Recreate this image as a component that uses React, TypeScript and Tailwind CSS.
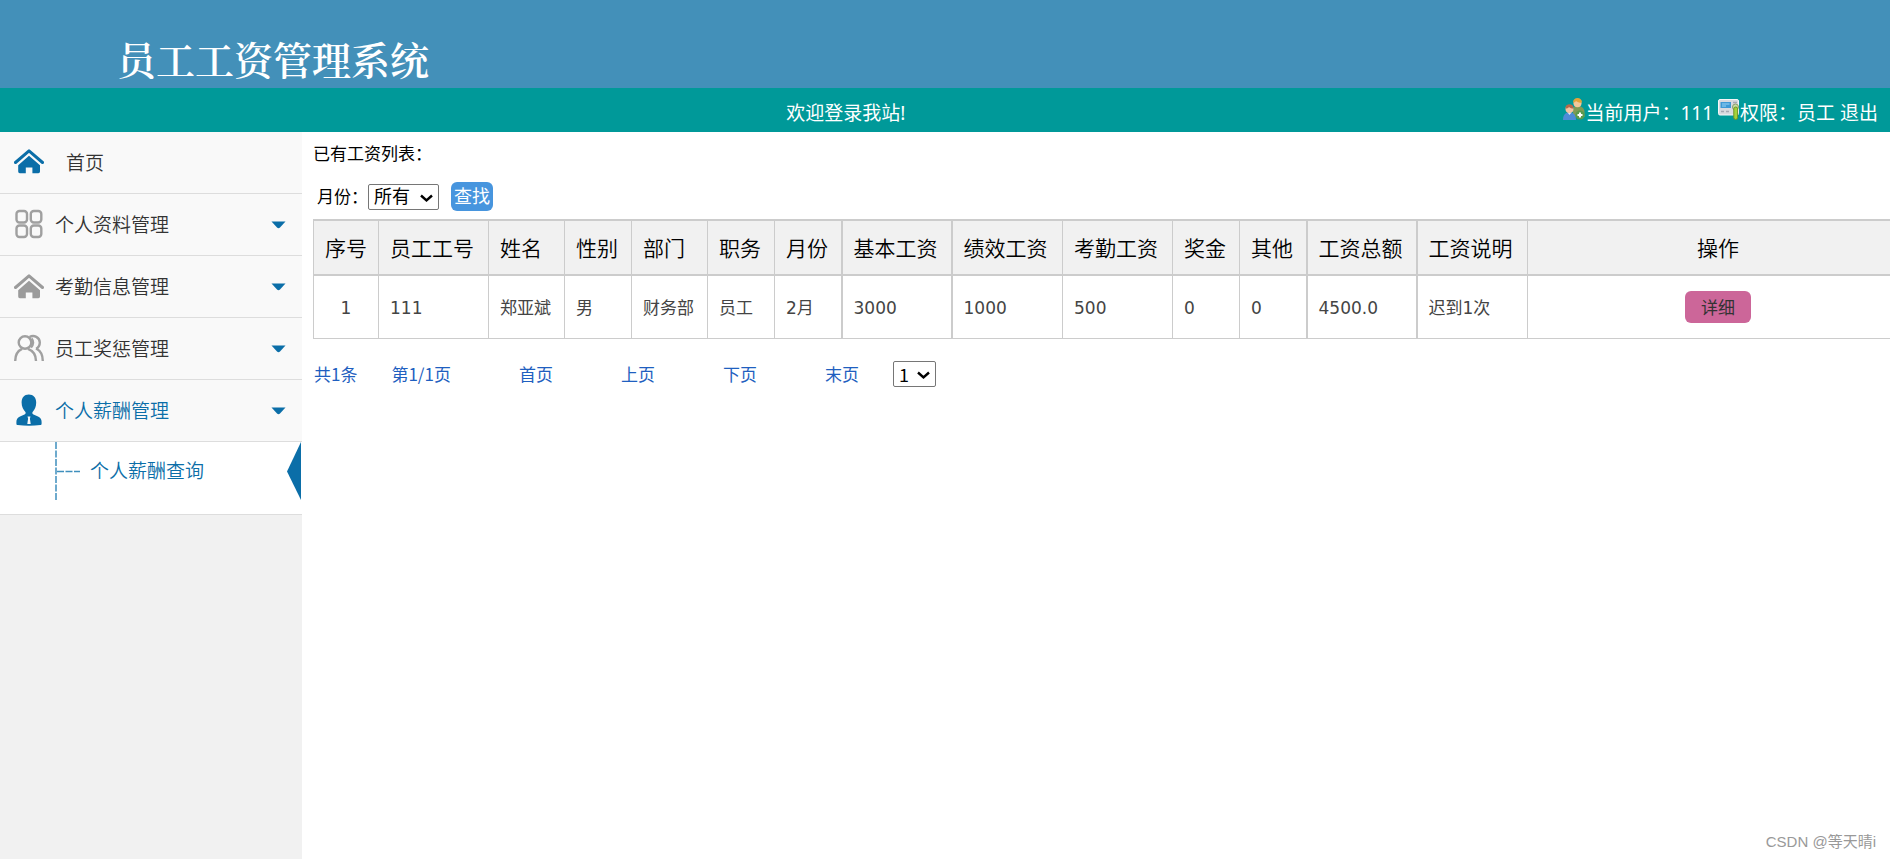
import type { ReactNode } from "react";

const columns = [
  { title: "序号", width: "w-[65px]" },
  { title: "员工工号", width: "w-[110px]" },
  { title: "姓名", width: "w-[76px]" },
  { title: "性别", width: "w-[67px]" },
  { title: "部门", width: "w-[76px]" },
  { title: "职务", width: "w-[67px]" },
  { title: "月份", width: "w-[67px]", thick: true },
  { title: "基本工资", width: "w-[110px]", thick: true },
  { title: "绩效工资", width: "w-[111px]" },
  { title: "考勤工资", width: "w-[110px]" },
  { title: "奖金", width: "w-[67px]" },
  { title: "其他", width: "w-[67px]", thick: true },
  { title: "工资总额", width: "w-[110px]", thick: true },
  { title: "工资说明", width: "w-[111px]" },
];

const rows = [
  ["1", "111", "郑亚斌", "男", "财务部", "员工", "2月", "3000", "1000", "500", "0", "0", "4500.0", "迟到1次"],
];

function HomeIcon({ color }: { color: string }) {
  return (
    <svg width="30" height="26" viewBox="0 0 30 26" fill="none">
      <path d="M1.5 14.500 15 2.800l13.500 11.700" stroke={color} strokeWidth="3" strokeLinecap="round" strokeLinejoin="round" />
      <path d="M15 7.800 26 17.300v6.300a1.600 1.600 0 0 1-1.600 1.600h-6v-5.600h-6.600v5.600h-6a1.600 1.600 0 0 1-1.600-1.600v-6.300z" fill={color} />
    </svg>
  );
}

function GridIcon() {
  return (
    <svg width="30" height="30" viewBox="0 0 30 30" fill="none" stroke="#a0a0a0" strokeWidth="2.400">
      <rect x="2.500" y="2" width="10.500" height="11.500" rx="3" />
      <rect x="16.800" y="2" width="10.500" height="11.500" rx="3" />
      <rect x="2.500" y="16.500" width="10.500" height="11.500" rx="3" />
      <rect x="16.800" y="16.500" width="10.500" height="11.500" rx="3" />
    </svg>
  );
}

function UsersIcon() {
  return (
    <svg width="30" height="28" viewBox="0 0 30 28" fill="none" stroke="#a0a0a0" strokeWidth="2.400">
      <circle cx="11" cy="8.500" r="6.300" />
      <path d="M1.200 27c0-6.500 3-10.500 6.800-12.200M14 14.800c4.500 1.700 8 5.700 8 12.200" />
      <path d="M15.500 3c4.500-2.500 10.300.2 10.300 5.600 0 3-1.500 5-3.600 6.200M22 14.500c4.200 2 6.800 6.300 6.800 12.500M17.500 4.500c2.300 2.600 2 6.500-.5 9" />
    </svg>
  );
}

function PersonIcon() {
  return (
    <svg width="30" height="32" viewBox="0 0 30 32">
      <path
        d="M14.800.5c4.600 0 7.400 3 7.400 8 0 4.400-1.600 7.200-3.400 9.200-.9 1-.5 2.300.7 2.800l4.500 1.900c2.600 1.100 3.600 3 3.600 5.600v1.800c0 .8-.5 1.200-1.200 1.300C19 31.800 11 31.800 3.600 31.100c-.7-.1-1.200-.5-1.200-1.300V28c0-2.600 1-4.500 3.600-5.600l4.500-1.900c1.200-.5 1.600-1.800.7-2.800-1.800-2-3.600-4.800-3.600-9.200 0-5 2.600-8 7.200-8z"
        fill="#0b6ea8"
      />
      <path d="M13.500 22.500h3l-.6 2 .8 5.500h-3.400l.8-5.500z" fill="#f9f9f9" />
    </svg>
  );
}

function UserAddIcon() {
  return (
    <svg className="inline-block align-baseline" width="22" height="22" viewBox="0 0 22 22">
      <path d="M10 13c0-4 2-5 5-5s6.500 2 6.500 6v5H10z" fill="#7f9a55" />
      <circle cx="14.500" cy="5.200" r="4" fill="#f3c79a" />
      <path d="M10 4.500C10 1.500 12 0 14.500 0S19 1.500 19 4.500c-3 .5-5-.5-6-1.500-.8 1-1.800 1.500-3 1.500z" fill="#e3a43a" />
      <path d="M0 22c0-5 2-7.500 6.500-7.500S13 17 13 22z" fill="#4d8bd6" />
      <path d="M4.500 14.500 6.500 17l2-2.500z" fill="#dce9f8" />
      <circle cx="6.500" cy="11" r="4" fill="#f3c4a4" />
      <path d="M2.400 10.500c0-3 1.800-4.300 4.100-4.300s4.100 1.300 4.100 4.300C8 10.500 6.800 9.800 6 9c-.8 1-2 1.500-3.600 1.500z" fill="#b5694a" />
      <circle cx="17" cy="17" r="4.600" fill="#5a9a4c" />
      <path d="M17 14.500v5M14.500 17h5" stroke="#fff" strokeWidth="2" />
    </svg>
  );
}

function TerminalIcon() {
  return (
    <svg className="inline-block align-baseline" width="22" height="22" viewBox="0 0 22 22">
      <rect x=".5" y="1.500" width="20" height="15.500" rx="1.500" fill="#d9dadf" stroke="#f6f6f8" />
      <rect x="2.500" y="4" width="10.500" height="6" fill="#3f9ad6" />
      <path d="M4 6h7.500M4 8h4" stroke="#9ad4f5" />
      <path d="M3 13.500h3M8 13.500h3M15 4.500h4" stroke="#a6a8b2" strokeWidth="1.500" />
      <circle cx="17.500" cy="9" r="3" fill="#c9dca4" stroke="#8a9a6a" />
      <rect x="15.800" y="9" width="3.800" height="12.500" rx="1.900" fill="#a4d23a" stroke="#6f9426" />
    </svg>
  );
}

function Select({ id, label, width, children }: { id: string; label?: string; width: string; children: ReactNode }) {
  return (
    <span className={`relative inline-flex ${width}`}>
      <select
        id={id}
        aria-label={label}
        className="h-[26px] w-full appearance-none rounded-xs border border-[#767676] bg-white pl-[5px] text-[18px] leading-6 text-black"
      >
        {children}
      </select>
      <svg
        className="pointer-events-none absolute top-[10px] right-1.5"
        width="13"
        height="9"
        viewBox="0 0 13 9"
        fill="none"
        stroke="#000000"
        strokeWidth="2.400"
      >
        <path d="m1 1.500 5.500 5L12 1.500" />
      </svg>
    </span>
  );
}

function MenuItem({ icon, label, active }: { icon: ReactNode; label: string; active?: boolean }) {
  return (
    <button
      className={`flex h-[62px] w-full items-center border-b border-[#dddddd] bg-[#f9f9f9] pr-4 pl-3.5 text-left ${
        active ? "text-[#0b6ea8]" : "text-[#333333]"
      }`}
    >
      <span className="flex w-[41px] shrink-0 pb-0.5">{icon}</span>
      <span className="flex-1 pt-0.5">{label}</span>
      <svg width="15" height="8" viewBox="0 0 15 8">
        <path d="M.5.500h14l-5.500 6q-1.500 1.500-3 0z" fill="#0b6ea8" />
      </svg>
    </button>
  );
}

function Sidebar() {
  return (
    <nav className="w-[302px] shrink-0 bg-[#f1f1f1] text-[19px] font-[350]">
      <a href="#home" className="flex h-[62px] items-center border-b border-[#dddddd] bg-[#f9f9f9] pl-3.5 text-[#333333]">
        <span className="flex w-[52px] pb-[3px]">
          <HomeIcon color="#0b6ea8" />
        </span>
        <span className="pt-0.5">首页</span>
      </a>
      <MenuItem icon={<GridIcon />} label="个人资料管理" />
      <MenuItem icon={<HomeIcon color="#9b9b9b" />} label="考勤信息管理" />
      <MenuItem icon={<UsersIcon />} label="员工奖惩管理" />
      <MenuItem icon={<PersonIcon />} label="个人薪酬管理" active />
      <div className="border-b border-[#dddddd] bg-white pb-3.5">
        <a href="#salary" className="flex h-[58px] items-center pr-px pl-[55px] text-[#0b6ea8]">
          <svg width="35" height="58" viewBox="0 0 35 58" stroke="#3f8fbd" strokeWidth="1.500">
            <path d="M1 0v58" strokeDasharray="7 1.500" />
            <path d="M2 29.500h23" strokeDasharray="7 1.500" />
          </svg>
          <span className="flex-1">个人薪酬查询</span>
          <svg width="14" height="58" viewBox="0 0 14 58">
            <path d="M14 0v58L0 29.500z" fill="#0b6ea8" />
          </svg>
        </a>
      </div>
    </nav>
  );
}

function SalaryTable() {
  return (
    <table className="mt-2 w-[calc(100%+19px)] table-fixed border-collapse border border-[#cccccc] text-left">
      <thead>
        <tr className="h-[55px] border-y-2 border-[#cccccc] bg-[#f1f1f1] text-[21px] text-black">
          {columns.map((col) => (
            <th
              key={col.title}
              className={`px-[11px] pt-1 font-[350] whitespace-nowrap border-[#cccccc] ${col.width} ${
                col.thick ? "border-r-2" : "border-r"
              }`}
            >
              {col.title}
            </th>
          ))}
          <th className="pt-1 text-center font-[350]">操作</th>
        </tr>
      </thead>
      <tbody>
        {rows.map((row) => (
          <tr key={row[0]} className="h-[63px] border-b border-[#cccccc] text-[17px] text-[#444444]">
            {row.map((cell, i) => (
              <td
                key={columns[i].title}
                className={`px-[11px] pt-1 whitespace-nowrap border-[#cccccc] ${i === 0 ? "text-center" : ""} ${
                  columns[i].thick ? "border-r-2" : "border-r"
                }`}
              >
                {cell}
              </td>
            ))}
            <td className="text-center">
              <button className="h-8 w-[66px] rounded-md bg-[#cc6699] pt-[3px] align-middle text-[#333333]">详细</button>
            </td>
          </tr>
        ))}
      </tbody>
    </table>
  );
}

export default function App() {
  return (
    <div className="relative flex min-h-screen flex-col overflow-hidden bg-white font-['DejaVu_Sans','Noto_Sans_CJK_SC',sans-serif]">
      <header className="flex h-[88px] items-end bg-[#4390b9] pl-[117px]">
        <h1 className="font-['Noto_Serif_CJK_SC','Noto_Sans_CJK_SC',serif] text-[39px] leading-[60px] font-semibold text-white">
          员工工资管理系统
        </h1>
      </header>
      <div className="flex h-11 items-center bg-[#009999] pt-1.5 pr-3 pl-[128px] font-['Noto_Sans','Noto_Sans_CJK_SC',sans-serif] text-[19px] text-white">
        <p className="flex-1 text-center">欢迎登录我站!</p>
        <p className="whitespace-nowrap">
          <UserAddIcon />
          当前用户：111 <TerminalIcon />
          权限：员工 <a href="#logout">退出</a>
        </p>
      </div>

      <div className="flex flex-1">
        <Sidebar />
        <main className="min-w-0 flex-1 pl-[11px]">
          <p className="pt-[9px] text-[17px] leading-[26px]">已有工资列表：</p>
          <form className="mt-[15px] flex items-center pl-1 text-[17px]">
            <label htmlFor="month" className="w-[51px] pt-0.5 whitespace-nowrap">
              月份：
            </label>
            <Select id="month" width="w-[71px]">
              <option>所有</option>
            </Select>
            <button type="button" className="ml-3 h-[29px] w-[42px] rounded-md bg-[#4795de] text-[18px] leading-6 text-white">
              查找
            </button>
          </form>
          <SalaryTable />
          <div className="mt-[22px] flex items-center gap-[34px] pl-px font-['Noto_Sans_CJK_SC',sans-serif] text-[17px] text-[#1f5fc0]">
            <span>共1条</span>
            <span>第1/1页</span>
            <div className="flex gap-[68px] pl-[34px]">
              <a href="#first">首页</a>
              <a href="#prev">上页</a>
              <a href="#next">下页</a>
              <a href="#last">末页</a>
            </div>
            <Select id="page" label="页码" width="w-[43px]">
              <option>1</option>
            </Select>
          </div>
        </main>
      </div>

      <p className="absolute right-3.5 bottom-1.5 font-['Liberation_Sans','Noto_Sans_CJK_SC',sans-serif] text-[15px] text-[#999999]">
        CSDN @等天晴i
      </p>
    </div>
  );
}
